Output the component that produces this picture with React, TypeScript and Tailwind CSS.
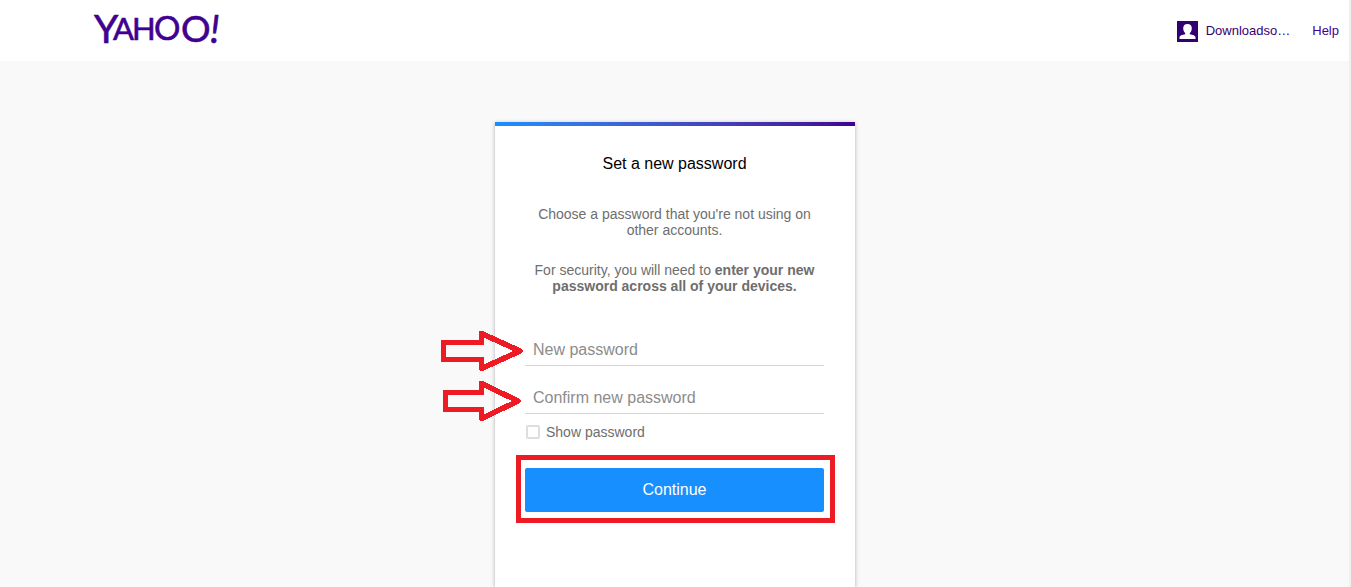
import React, { useState } from 'react';

interface PasswordFieldProps {
  id: string;
  label: string;
  visible: boolean;
  arrowClass: string;
  arrowTail: number;
  arrowTip: number;
}

function YahooLogo() {
  return (
    <svg width="128" height="40" viewBox="0 0 128 40" className="overflow-visible" role="img" aria-label="Yahoo!">
      <text y="32" fill="#400090" stroke="#400090" strokeWidth="0.6" fontFamily="Lato, sans-serif" fontSize="38">
        <tspan x="0" fontSize="39">Y</tspan>
        <tspan x="19" y="29" fontSize="31">A</tspan>
        <tspan x="38" y="29" fontSize="31">H</tspan>
        <tspan x="60" y="29" fontSize="33">O</tspan>
        <tspan x="87" y="31" fontSize="37">O</tspan>
        <tspan x="116" y="32" fontSize="38" fontStyle="italic">!</tspan>
      </text>
    </svg>
  );
}

function AvatarIcon() {
  return (
    <svg width="21" height="21" viewBox="0 0 21 21" aria-hidden="true">
      <path d="M0 0h21v21H0z" fill="#330072" />
      <path
        d="M10.500 3c2.700 0 4.300 1.600 4.300 4.200 0 2.100-.8 3.800-2 4.700v1.400c3 .5 5.700 1.300 5.700 3.200v1.500h-16v-1.500c0-1.900 2.700-2.700 5.700-3.200v-1.400c-1.200-.9-2-2.600-2-4.700C6.200 4.600 7.800 3 10.500 3z"
        fill="#fff"
      />
    </svg>
  );
}

function PasswordField({ id, label, visible, arrowClass, arrowTail, arrowTip }: PasswordFieldProps) {
  return (
    <div className="relative">
      {/* Arrow pointing at the field */}
      <svg
        className={`absolute pointer-events-none ${arrowClass}`}
        width="86"
        height="42"
        viewBox="0 0 86 42"
        aria-hidden="true"
      >
        <path
          d={`M${arrowTail} 12.500H41.500V3.500l${arrowTip - 41.5} 17.500-${arrowTip - 41.5} 17.500v-9H${arrowTail}z`}
          fill="none"
          stroke="#ed1c24"
          strokeWidth="5.5"
          strokeLinejoin="round"
          shapeRendering="crispEdges"
        />
      </svg>
      <input
        id={id}
        type={visible ? 'text' : 'password'}
        aria-label={label}
        placeholder={label}
        className="block w-full h-8 px-2 text-base text-[#26282a] placeholder:text-[#8c8c8c] bg-transparent border-b border-[#d8d8dc] outline-none"
      />
    </div>
  );
}

export default function App() {
  const [visible, setVisible] = useState(false);

  return (
    <div className="min-h-screen flex flex-col bg-[#f9f9f9] border-r-2 border-[#f0f0f0] font-['Liberation_Sans',Arial,sans-serif]">
      <header className="flex items-start justify-between bg-white h-[61px] pl-[94px] pr-[10px]">
        <a href="#" className="pt-[11px]">
          <YahooLogo />
        </a>
        <nav className="flex items-center h-[62px] text-[13px] text-[#330072]">
          <a href="#" className="flex items-center gap-2">
            <AvatarIcon />
            <span>Downloadso…</span>
          </a>
          <a href="#" className="ml-[22px] text-[#400090]">Help</a>
        </nav>
      </header>

      <main className="flex-1 flex justify-center pt-[61px] pl-px">
        <section className="w-[360px] bg-white shadow-[0_1px_4px_rgba(0,0,0,0.3)]">
          <div className="h-1 bg-linear-to-r from-[#188fff] to-[#400090]" />
          <form className="pl-[30px] pr-[31px] pt-[26px]" onSubmit={(e) => e.preventDefault()}>
            <h1 className="text-base leading-6 text-center text-black">Set a new password</h1>
            <p className="mt-[30px] text-sm leading-4 text-center text-[#6e6e6e]">
              Choose a password that you're not using on other accounts.
            </p>
            <p className="mt-6 text-sm leading-4 text-center text-[#6e6e6e]">
              For security, you will need to <b>enter your new password across all of your devices.</b>
            </p>

            <div className="mt-10 flex flex-col gap-4">
              <PasswordField
                id="password"
                label="New password"
                visible={visible}
                arrowClass="-left-[85px] -top-1"
                arrowTail={3.5}
                arrowTip={80}
              />
              <PasswordField
                id="confirm"
                label="Confirm new password"
                visible={visible}
                arrowClass="-left-[85px] -top-0.5"
                arrowTail={5.5}
                arrowTip={78}
              />
            </div>

            <div className="mt-2 flex items-center gap-[6px] pl-px">
              <input
                id="show"
                type="checkbox"
                checked={visible}
                onChange={(e) => setVisible(e.target.checked)}
                className="appearance-none w-[14px] h-[14px] border-2 border-[#dedee2] rounded-xs bg-white checked:bg-[#188fff]"
              />
              <label htmlFor="show" className="text-sm text-[#6e6e6e]">Show password</label>
            </div>

            <div className="relative mt-[26px]">
              <button
                type="submit"
                className="w-full h-11 rounded-xs bg-[#188fff] text-base text-white"
              >
                Continue
              </button>
              {/* Highlight frame around the button */}
              <div className="absolute -left-[9px] -right-[11px] -top-[13px] -bottom-[11px] border-5 border-[#ed1c24] pointer-events-none" />
            </div>
          </form>
        </section>
      </main>
    </div>
  );
}
